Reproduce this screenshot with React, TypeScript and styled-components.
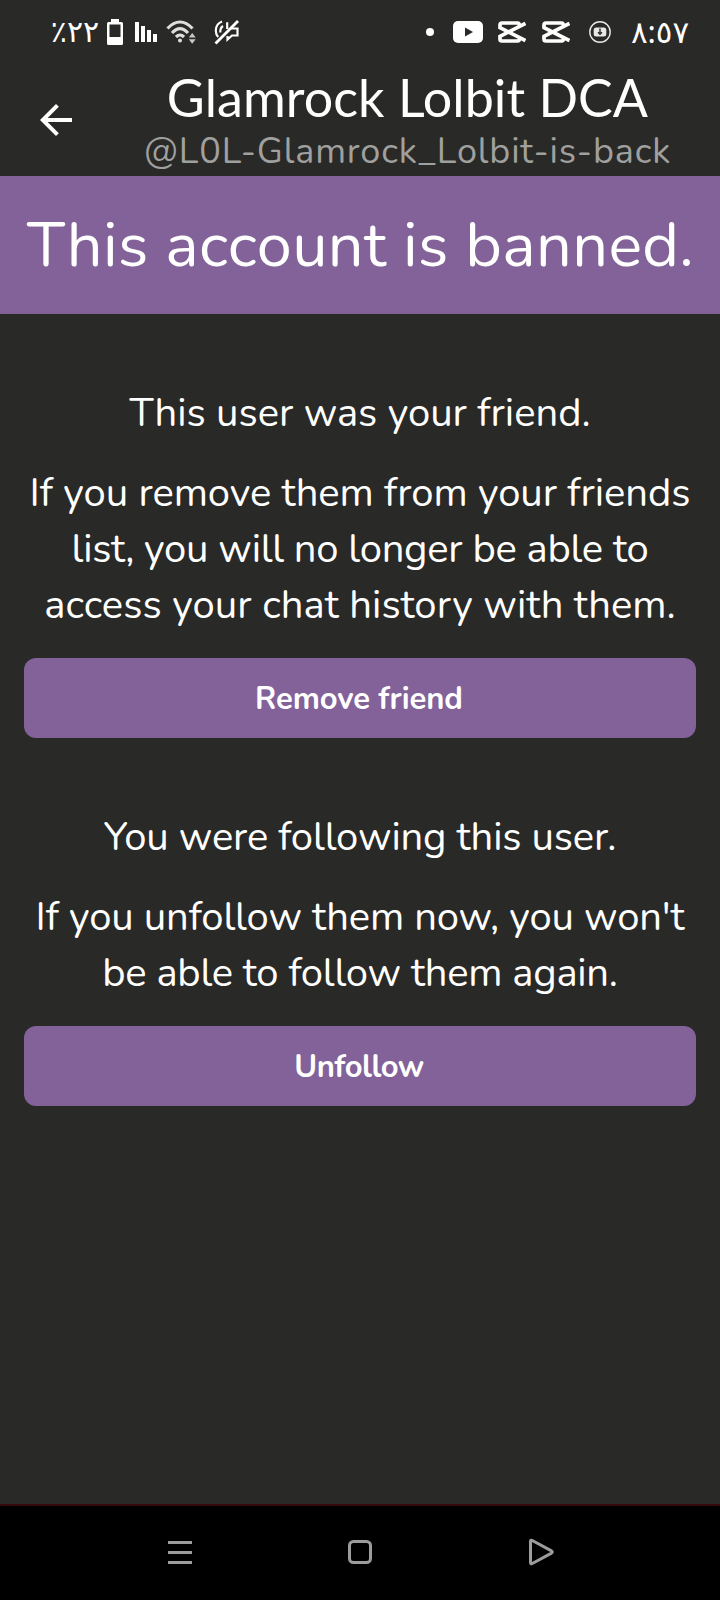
import React from "react";
import styled, { createGlobalStyle } from "styled-components";

const body = `Nunito, Lato, "Open Sans", sans-serif`;
const purple = "#826299";

const GlobalStyle = createGlobalStyle`
  * { box-sizing: border-box; }
  body { margin: 0; background: #292927; }
`;

const Screen = styled.div`
  display: flex;
  flex-direction: column;
  width: 720px;
  height: 1600px;
  overflow: hidden;
  background: #292927;
  color: #fff;
  font-family: ${body};
`;

const StatusBar = styled.div`
  display: flex;
  justify-content: space-between;
  height: 64px;
  padding: 0 32px 0 52px;
`;

const StatusGroup = styled.div`
  display: flex;
  align-items: center;
`;

const StatusIcon = styled.svg<{ $gap: number }>`
  display: block;
  flex: none;
  margin-left: ${(p) => p.$gap}px;
`;

const StatusText = styled.span<{ $width: number; $gap?: number; $size: number }>`
  display: flex;
  justify-content: center;
  width: ${(p) => p.$width}px;
  margin-left: ${(p) => p.$gap ?? 0}px;
  padding-bottom: 2px;
  font: ${(p) => p.$size}px/40px "Noto Sans", "DejaVu Sans", sans-serif;
  white-space: nowrap;
`;

const Header = styled.header`
  display: flex;
  height: 112px;
`;

const BackButton = styled.button`
  display: flex;
  align-items: center;
  width: 96px;
  padding: 0 0 0 32px;
  border: 0;
  background: none;
  color: #fff;
`;

const Titles = styled.div`
  display: flex;
  flex: 1;
  flex-direction: column;
  align-items: center;
  justify-content: center;
  padding-right: 1px;
  white-space: nowrap;
`;

const Title = styled.h1`
  margin: 0;
  font: 400 52px/62px Lato, sans-serif;
  letter-spacing: 0.06px;
`;

const Handle = styled.div`
  padding-top: 1px;
  margin-bottom: -1px;
  color: #a0a09f;
  font-size: 36px;
  line-height: 46px;
  letter-spacing: 0.84px;
`;

const Banner = styled.div`
  display: flex;
  align-items: center;
  justify-content: center;
  height: 138px;
  padding-left: 1px;
  background: ${purple};
  font-size: 63px;
  letter-spacing: 0.36px;
  white-space: nowrap;
`;

const Content = styled.main`
  display: flex;
  flex: 1;
  flex-direction: column;
  gap: 71px;
  padding: 71px 24px 0;
`;

const Section = styled.section`
  display: flex;
  flex-direction: column;
  gap: 24px;
`;

const Paragraph = styled.p`
  margin: 0;
  font-size: 40px;
  line-height: 56px;
  text-align: center;
  white-space: nowrap;
`;

const Line = styled.span<{ $spacing?: number }>`
  display: block;
  letter-spacing: ${(p) => p.$spacing ?? 0}px;
`;

const Action = styled.button<{ $spacing: number }>`
  height: 80px;
  margin-top: 1px;
  padding: 2px 2px 0 0;
  border: 0;
  border-radius: 12px;
  background: ${purple};
  color: #fff;
  font: 700 31px/44px ${body};
  letter-spacing: ${(p) => p.$spacing}px;
`;

const NavBar = styled.nav`
  display: flex;
  align-items: center;
  justify-content: center;
  gap: 150px;
  height: 96px;
  border-top: 2px solid #350a0c;
  background: #000;
`;

const NavIcon = styled.svg`
  display: block;
  fill: none;
  stroke: #9c9c9c;
  stroke-width: 3;
`;

function CapCut({ gap }: { gap: number }) {
  return (
    <StatusIcon $gap={gap} width="28" height="22" viewBox="0 0 28 22" fill="none" stroke="#fff" strokeWidth="3.700">
      <path d="M27.500 2.500 2 15.300V18Q2 20 4 20H19.500Q21.500 20 21.500 17" />
      <path d="M27.500 19.500 2 6.700V4Q2 2 4 2H19.500Q21.500 2 21.500 5" />
    </StatusIcon>
  );
}

export default function App() {
  return (
    <>
      <GlobalStyle />
      <Screen>
        <StatusBar>
          <StatusGroup>
            <StatusText $width={46} $size={30}>٪٢٢</StatusText>
            <StatusIcon $gap={9} width="16" height="26" viewBox="0 0 16 26">
              <path fill="#fff" fillRule="evenodd" d="M4 0h8v3h2.500Q16 3 16 4.500V24.500Q16 26 14.500 26h-13Q0 26 0 24.500v-20Q0 3 1.500 3H4zM2.500 5.500V18h11V5.500z" />
            </StatusIcon>
            <StatusIcon $gap={12} width="22" height="20" viewBox="0 0 22 20" fill="#fff">
              <path d="M0 0h4v20H0zM6 4h4v16H6zM12 8h4v12h-4zM18 12h4v8h-4z" />
            </StatusIcon>
            <StatusIcon $gap={9} width="30" height="24" viewBox="0 0 30 24" fill="none" stroke="#dededc" strokeWidth="3.200">
              <path d="M1.500 8.500Q7.500 2 14 2T26.500 8.500" />
              <path d="M6 13Q10 8.700 14 8.700T22 13" />
              <path d="M10 17Q12 15 14 15T18 17" />
              <circle cx="14" cy="20.500" r="2" fill="#dededc" stroke="none" />
              <path d="M22.800 17.500 26.200 13 29.700 17.500zM22.800 19.300h6.900L26.200 23.800z" fill="#c8c8c6" stroke="none" />
            </StatusIcon>
            <StatusIcon $gap={18} width="26" height="26" viewBox="0 0 26 26" fill="none" stroke="#fff" strokeWidth="2.200">
              <path d="M8 2.500Q1.800 5 1.800 11.500Q1.800 15.500 4.200 18" />
              <path d="M9 7Q6 9 6.300 13.500" />
              <path d="M13.200 10V3.200M17 9.500H23.500V16.500H18L13.500 20.500V17" />
              <path d="M1.500 24.500 24 2" strokeWidth="2.800" />
            </StatusIcon>
          </StatusGroup>
          <StatusGroup>
            <StatusIcon $gap={0} width="8" height="8" viewBox="0 0 8 8">
              <circle cx="4" cy="4" r="4" fill="#fff" />
            </StatusIcon>
            <StatusIcon $gap={19} width="30" height="22" viewBox="0 0 30 22">
              <rect width="30" height="22" rx="5" fill="#fff" />
              <path d="m12 6.500 8 4.500-8 4.500z" fill="#292927" />
            </StatusIcon>
            <CapCut gap={15} />
            <CapCut gap={16} />
            <StatusIcon $gap={19} width="22" height="22" viewBox="0 0 22 22">
              <circle cx="11" cy="11" r="10.200" fill="none" stroke="#e8e8e6" strokeWidth="1.400" />
              <rect x="4.700" y="6.500" width="12.600" height="9" rx="2.500" fill="#e8e8e6" />
              <path d="M11 7.500v5M9 11.200l2 2 2-2" fill="none" stroke="#292927" strokeWidth="1.400" />
            </StatusIcon>
            <StatusText $width={56} $gap={21} $size={31}>٨:٥٧</StatusText>
          </StatusGroup>
        </StatusBar>

        <Header>
          <BackButton aria-label="Back">
            <svg width="48" height="48" viewBox="0 0 24 24" fill="currentColor">
              <path d="M20 11H7.830l5.590-5.590L12 4l-8 8 8 8 1.410-1.410L7.830 13H20v-2z" />
            </svg>
          </BackButton>
          <Titles>
            <Title>Glamrock Lolbit DCA</Title>
            <Handle>@L0L-Glamrock_Lolbit-is-back</Handle>
          </Titles>
        </Header>

        <Banner>This account is banned.</Banner>

        <Content>
          <Section>
            <Paragraph>This user was your friend.</Paragraph>
            <Paragraph>
              <Line $spacing={-0.05}>If you remove them from your friends</Line>
              <Line $spacing={-0.27}>list, you will no longer be able to</Line>
              <Line $spacing={0.07}>access your chat history with them.</Line>
            </Paragraph>
            <Action $spacing={-0.05}>Remove friend</Action>
          </Section>
          <Section>
            <Paragraph>
              <Line $spacing={-0.16}>You were following this user.</Line>
            </Paragraph>
            <Paragraph>
              <Line $spacing={-0.14}>If you unfollow them now, you won't</Line>
              <Line $spacing={-0.27}>be able to follow them again.</Line>
            </Paragraph>
            <Action $spacing={-0.5}>Unfollow</Action>
          </Section>
        </Content>

        <NavBar>
          <NavIcon width="30" height="30" viewBox="0 0 30 30">
            <path d="M3 4.500h24M3 14.500h24M3 24.500h24" />
          </NavIcon>
          <NavIcon width="30" height="30" viewBox="0 0 30 30">
            <rect x="4.500" y="3.500" width="21" height="21" rx="4" />
          </NavIcon>
          <NavIcon width="30" height="30" viewBox="0 0 30 30" strokeLinejoin="round">
            <path d="M5.500 3.500Q5.500 1.500 7.300 2.500L26.500 12.900Q28 14 26.500 15.100L7.300 25.500Q5.500 26.500 5.500 24.500z" />
          </NavIcon>
        </NavBar>
      </Screen>
    </>
  );
}
